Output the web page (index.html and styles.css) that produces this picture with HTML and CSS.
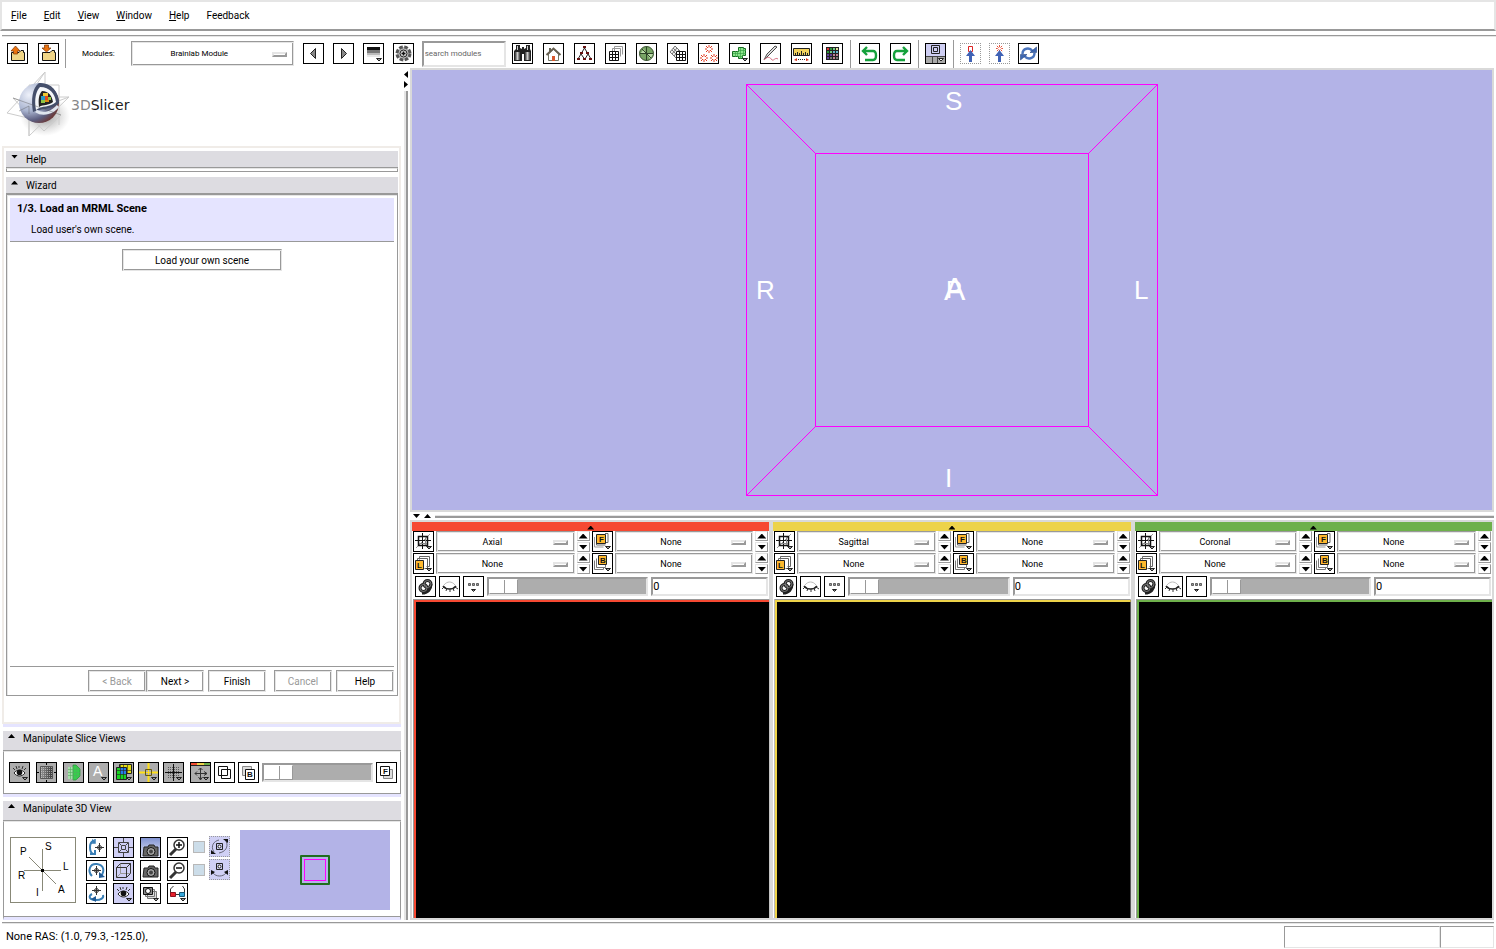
FILE: index.html
```html
<!doctype html>
<html lang="en">
<head>
<meta charset="UTF-8">
<title>3DSlicer</title>
<link rel="stylesheet" href="styles.css">
</head>
<body>

<!-- icon set -->
<svg class="sprite" aria-hidden="true">
<defs>
<radialGradient id="ball" cx="25%" cy="30%" r="80%"><stop offset="0" stop-color="#eef1fa"/><stop offset=".5" stop-color="#a9b4d0"/><stop offset=".8" stop-color="#5c5e80"/><stop offset="1" stop-color="#6b3a3a"/></radialGradient>
<radialGradient id="shade"><stop offset="0" stop-color="#444" stop-opacity=".8"/><stop offset="1" stop-color="#888" stop-opacity="0"/></radialGradient>
<linearGradient id="fade"><stop offset="0" stop-color="#999"/><stop offset="1" stop-color="#333"/></linearGradient>
<linearGradient id="sky" x1="0" y1="0" x2="0" y2="1"><stop offset="0" stop-color="#8294d2"/><stop offset="1" stop-color="#e4e8fa"/></linearGradient>
<linearGradient id="tube"><stop offset="0" stop-color="#333"/><stop offset=".5" stop-color="#ccc"/><stop offset="1" stop-color="#333"/></linearGradient>
<pattern id="dots" width="2" height="2" patternUnits="userSpaceOnUse"><path fill="#222" d="M0 0h1v1H0z"/></pattern>
<pattern id="lights" width="2" height="2" patternUnits="userSpaceOnUse"><path fill="#ddd" d="M0 0h1v1H0z"/></pattern>
</defs>
<symbol id="dd" viewBox="0 0 19 19"><path d="M12.500 14.500h5l-2.500 2.500z" fill="#999" stroke="#222"/></symbol>
<symbol id="i-folder" viewBox="0 0 19 19"><path d="M3.500 8.500H11l2-2h2.500v2h1v8h-13z" fill="#f0d587" stroke="#111"/></symbol>
<symbol id="i-load" viewBox="0 0 19 19"><use href="#i-folder"/><path d="M7.500 2l4.500 5H9.500v3h-4V7H3z" fill="#ea720f" stroke="#7a3505" stroke-width=".7"/></symbol>
<symbol id="i-save" viewBox="0 0 19 19"><use href="#i-folder"/><path d="M7.500 8L12 4H9.500V1h-4v3H3z" fill="#ea720f" stroke="#7a3505" stroke-width=".7"/></symbol>
<symbol id="i-prev" viewBox="0 0 19 19"><path d="M11.500 4.500v10l-5-5z" fill="#888" stroke="#222"/></symbol>
<symbol id="i-next" viewBox="0 0 19 19"><path d="M7.500 4.500v10l5-5z" fill="#888" stroke="#222"/></symbol>
<symbol id="i-history" viewBox="0 0 19 19"><path fill="#111" d="M3 3h13v3H3z"/><path fill="#777" d="M3 6h13v3H3z"/><path fill="#bbb" d="M3 9h13v2H3z"/><path fill="#e8e8e8" d="M3 11h13v2H3z"/><use href="#dd"/></symbol>
<symbol id="i-gear" viewBox="0 0 19 19"><circle cx="9.500" cy="9.500" r="6.500" fill="#bbb" stroke="#555" stroke-width="3" stroke-dasharray="3.600 1.500"/><circle cx="9.500" cy="9.500" r="3.500" fill="#ddd" stroke="#222"/><path d="M9.500 7.500v4m-2-2h4" stroke="#111" stroke-width="1.500"/></symbol>
<symbol id="i-binoculars" viewBox="0 0 19 19"><path d="M3 1h4v3l2 1V3h2v2l2-1V1h4v4l1 2v10h-7v-7H9v7H1V7l2-2z" fill="#222"/><path fill="url(#tube)" d="M2 8h5v8H2z"/><path fill="url(#tube)" d="M12 8h5v8h-5z"/><path d="M4.500 2v4m10-4v4" stroke="#ccc"/></symbol>
<symbol id="i-home" viewBox="0 0 19 19"><path d="M5 4h2v4H5z" fill="#665"/><path d="M4.500 10v6.500h10V10l-5-5z" fill="#fff" stroke="#776"/><path d="M2.500 11l7-6.500 7 6.500" fill="none" stroke="#665f50" stroke-width="2"/><path d="M8 12h3v5H8z" fill="#d8572c"/></symbol>
<symbol id="i-tree" viewBox="0 0 19 19"><path d="M9.500 4L3 15m6.500-11l6.500 11M6 10l3.500 5m3.500-5l-3 5" fill="none" stroke="#222"/><path d="M8 2h3v2H8zM5 8h3v2H5zm6 0h3v2h-3zM2 14h3v2H2zm6 0h3v2H8zm6 0h3v2h-3z" fill="#611"/></symbol>
<symbol id="i-volumes" viewBox="0 0 19 19"><path d="M8.500 12.500v-10h8v8M6.500 12.500v-8h8v8" fill="none" stroke="#999"/><path d="M3 7h10v10H3z" fill="#fff"/><path d="M3.500 7.500h9v9h-9zM6.500 7v10m3-10v10M3 10.500h10m-10 3h10" fill="none" stroke="#111"/></symbol>
<symbol id="i-models" viewBox="0 0 19 19"><circle cx="9.500" cy="9.500" r="7" fill="#78a565" stroke="#354e2a"/><path d="M3 10l4-5 2 5zM10 10h6l-3 5z" fill="#bddcaa"/><path d="M9.500 2.500v14M3 9.500h13M5 5l4 4 5 5" fill="none" stroke="#2d4427"/></symbol>
<symbol id="i-transforms" viewBox="0 0 19 19"><path d="M7 2l7 7-5 6-7-7z" fill="#eee" stroke="#777"/><path d="M5 4l7 7M4 6l7 7M9 4L4 10m7-4l-5 6" fill="none" stroke="#777"/><path fill="#fff" d="M8 7h10v10H8z"/><path d="M8.500 7.500h9v9h-9zM11.500 7v10m3-10v10M8 10.500h10m-10 3h10" fill="none" stroke="#111"/></symbol>
<symbol id="i-spark" viewBox="0 0 8 8"><path d="M4 0v2.500M4 5.500V8M1 1l2 2m2 2l2 2M7 1L5 3M3 5L1 7M0 4h2m4 0h2" stroke="#e23b20" fill="none"/></symbol>
<symbol id="i-fiducials" viewBox="0 0 19 19"><use href="#i-spark" x="6" y="1" width="8" height="8"/><use href="#i-spark" x="1" y="10" width="8" height="8"/><use href="#i-spark" x="11" y="10" width="8" height="8"/></symbol>
<symbol id="i-editor" viewBox="0 0 19 19"><path d="M8.500 3.500h5v1h2v7h-3v3h-4v-2h-6v-5h6z" fill="#8be58b" stroke="#156b20"/><path d="M7.500 7v6m3-9v11m3-10v7M3 9.500h13M8 6.500h8M5.500 7v6M9 12.500h4" stroke="#3aa348" stroke-width=".7"/><use href="#dd"/></symbol>
<symbol id="i-measure" viewBox="0 0 19 19"><path d="M3 16l3-6 8-8 2 1-8 8z" fill="#ddd" stroke="#222" stroke-width=".8"/><path d="M3 16c4-4 6-3 8 0 2 1 3-3 6-1" fill="none" stroke="#d67083"/></symbol>
<symbol id="i-ruler" viewBox="0 0 19 19"><path d="M1.500 4.500h16v7h-16z" fill="#f3d25b" stroke="#222"/><path d="M3.500 12V9m2 3V8m2 4V9m2 3V7m2 5V9m2 3V8m2 4V9" stroke="#222"/><path d="M2 16l3-2v3zm15 0l-3-2v3z" fill="#d8331d"/><path d="M6 15.500h7" stroke="#222" stroke-dasharray="1 1"/></symbol>
<symbol id="i-colors" viewBox="0 0 19 19"><path fill="#222" d="M3 3h13v13H3z"/><path fill="#d33" d="M4 4h2v2H4z"/><path fill="#2a9a3a" d="M7 4h2v2H7zM4 7h2v2H4z"/><path fill="#70cc86" d="M10 4h2v2h-2zM7 7h2v2H7z"/><path fill="#e0dc9a" d="M13 4h2v2h-2z"/><path fill="#61b7cc" d="M10 7h2v2h-2zM13 7h2v2h-2z"/><path fill="#64439c" d="M4 10h2v2H4zM7 10h2v2H7zM4 13h2v2H4z"/><path fill="#be8195" d="M10 10h2v2h-2zM13 10h2v2h-2zM10 13h2v2h-2z"/><path fill="#777" d="M7 13h2v2H7zM13 13h2v2h-2z"/></symbol>
<symbol id="i-undo" viewBox="0 0 19 19"><path d="M7 3L3 7l4 4M4 7h9c4 0 4 9 0 9H5" fill="none" stroke="#15a13c" stroke-width="2.400"/></symbol>
<symbol id="i-redo" viewBox="0 0 19 19"><path d="M12 3l4 4-4 4M15 7H6c-4 0-4 9 0 9h8" fill="none" stroke="#15a13c" stroke-width="2.400"/></symbol>
<symbol id="i-layout" viewBox="0 0 19 19"><path fill="#cfcff3" d="M0 0h19v12H0z"/><path fill="#aaa" d="M0 13h19v6H0z"/><path d="M0 12.500h19M6.500 13v6m5-6v6" stroke="#444"/><path d="M5.500 1.500h8v8h-8zM7.500 3.500h4v4h-4z" fill="none" stroke="#222"/><path d="M12.500 14.500h5l-2.500 2.500z" fill="#fff" stroke="#222"/></symbol>
<symbol id="i-pick" viewBox="0 0 19 19"><path d="M7.500 2.500h4v5h-4z" fill="none" stroke="#d22"/><path d="M9.500 6l4.500 6h-3v6H8v-6H5z" fill="#4062b5"/></symbol>
<symbol id="i-place" viewBox="0 0 19 19"><use href="#i-spark" x="6" y="1" width="7" height="7"/><path d="M9.500 6l4.500 6h-3v6H8v-6H5z" fill="#4062b5"/></symbol>
<symbol id="i-refresh" viewBox="0 0 19 19"><path d="M3.500 10c0-6 7-7 10-3M15.500 9c0 6-7 7-10 3" fill="none" stroke="#4a74bd" stroke-width="2.400"/><path d="M11 8.500h6.500V3zM8 10.500H1.500V16z" fill="#3e67b0" stroke="#264785" stroke-width=".6"/></symbol>
<symbol id="i-eye" viewBox="0 0 19 19"><path d="M4 10c3-4 8-4 11 0-3 4-8 4-11 0z" fill="#fff" stroke="#222"/><circle cx="9.500" cy="9.500" r="2.800" fill="#111"/><path d="M5 7L3 5m4 1L6 3m3 2V3m3 3l1-3m1 4l2-2" stroke="#333"/><use href="#dd"/></symbol>
<symbol id="i-fit" viewBox="0 0 19 19"><path d="M3.500 3.500h12v12h-12z" fill="url(#fade)" stroke="#555"/><path d="M4 4h11v11H4z" fill="url(#lights)" opacity=".6"/><path d="M9.500 0v2m0 15v2M0 9.500h2m15 0h2" stroke="#000"/></symbol>
<symbol id="i-label" viewBox="0 0 19 19"><path d="M4 4h6v12H4z" fill="#a9dfac"/><path d="M9 2h3l4 4v7l-4 4H9z" fill="#36cf4b" stroke="#279037" stroke-width=".7"/><path d="M4 6.500h12M4 9.500h12M4 12.500h12M6.500 4v12m3-13v14m3-14v14" stroke="#4fae5c" stroke-width=".6"/></symbol>
<symbol id="i-blend" viewBox="0 0 19 19"><path fill="#e6df13" stroke="#222" d="M5.500 1.500h12v9h-12z"/><path fill="#18d321" stroke="#222" d="M2.500 4.500h10v12h-10z"/><path fill="#267de8" d="M6 5h6v6H6z"/><path d="M6.500 2v14m3-14v14m4-14v9M3 7.500h14m-14 4h10" stroke="#222" stroke-width=".6"/><use href="#dd"/></symbol>
<symbol id="i-cross" viewBox="0 0 19 19"><path d="M9.500 0v6m0 7v6M0 9.500h6m7 0h6" stroke="#ffdf18" stroke-width="2"/><path d="M6.500 6.500h6v6h-6z" fill="none" stroke="#665a08"/><path d="M9.500 7v5M7 9.500h5" stroke="#ffdf18"/><use href="#dd"/></symbol>
<symbol id="i-grid" viewBox="0 0 19 19"><path d="M3 3h13v13H3z" fill="url(#dots)" opacity=".6"/><path d="M9.500 1v17M1 9.500h17" stroke="#111"/><use href="#dd"/></symbol>
<symbol id="i-move" viewBox="0 0 19 19"><path fill="#f34e33" d="M0 0h6v2H0z"/><path fill="#edd34a" d="M6 0h7v2H6z"/><path fill="#6eb04b" d="M13 0h6v2h-6z"/><path d="M0 2.500h19" stroke="#222"/><path d="M9.500 5v12M4 10.500h12M7.500 7l2-2 2 2m-4 7l2 3 2-3M6 8.500l-2 2 2 2m7-4l3 2-3 2" fill="none" stroke="#333"/><use href="#dd"/></symbol>
<symbol id="i-overlap" viewBox="0 0 19 19"><path d="M3.500 3.500h9v9h-9zM6.500 6.500h9v9h-9z" fill="none" stroke="#111"/></symbol>
<symbol id="i-back" viewBox="0 0 19 19"><path d="M3.500 3.500h9v9h-9z" fill="#ddd" stroke="#888"/><path d="M6.500 6.500h9v10h-9z" fill="#fff" stroke="#111"/></symbol>
<symbol id="i-fore" viewBox="0 0 19 19"><path d="M6.500 6.500h9v9h-9z" fill="#ddd" stroke="#888"/><path d="M3.500 3.500h9v9h-9z" fill="#fff" stroke="#111"/></symbol>
<symbol id="i-target" viewBox="0 0 19 19"><circle cx="9.500" cy="9.500" r="2" fill="none" stroke="#333"/><path d="M9.500 5v9M5 9.500h9" stroke="#333"/></symbol>
<symbol id="i-pitch" viewBox="0 0 19 19"><path d="M6 16C2 14 2 5 6 3M3 16h5v-4" fill="none" stroke="#397eb5" stroke-width="2"/><path d="M4 5h4V1M5 2c2 0 2 3 2 3" fill="none" stroke="#397eb5" stroke-width="1.500"/><use href="#i-target" x="3"/></symbol>
<symbol id="i-roll" viewBox="0 0 19 19"><path d="M5 15C0 10 3 2 10 3s8 7 4 12" fill="none" stroke="#397eb5" stroke-width="2"/><path d="M12 17v-6l6 5z" fill="#205994"/><use href="#i-target"/></symbol>
<symbol id="i-yaw" viewBox="0 0 19 19"><path d="M5 10c-4 2-3 6 4 6 5 0 8-2 7-5" fill="none" stroke="#397eb5" stroke-width="2"/><path d="M9 12v6l-5-3z" fill="#205994"/><use href="#i-target" y="-3"/></symbol>
<symbol id="i-center" viewBox="0 0 19 19"><path d="M4.500 4.500h10v10h-10zM7.500 7.500h4v4h-4zM9.500 0v4m0 11v4M0 9.500h4m11 0h4M5 5l2 2m7-2l-2 2m-7 7l2-2m7 2l-2-2" fill="none" stroke="#444"/></symbol>
<symbol id="i-cube" viewBox="0 0 19 19"><path d="M6.500 3v9.500H16m-13.500 4l4-4" fill="none" stroke="#999"/><path d="M2.500 6.500h10v10h-10zM6.500 2.500h10v10M2.500 6.500l4-4m6 4l4-4m-4 14l4-4" fill="none" stroke="#333"/></symbol>
<symbol id="i-camera" viewBox="0 0 19 19"><path d="M3 7h4l1-2h5l1 2h3v9H2z" fill="#666" stroke="#222"/><circle cx="10" cy="11.500" r="4" fill="#aaa" stroke="#111"/><circle cx="10" cy="11.500" r="2" fill="#444"/></symbol>
<symbol id="i-shot" viewBox="0 0 19 19"><path d="M0 0h19v19H0z" fill="url(#sky)"/><use href="#i-camera" y="2"/></symbol>
<symbol id="i-zoomin" viewBox="0 0 19 19"><path d="M8 11l-6 6" stroke="#333" stroke-width="3"/><circle cx="11" cy="7" r="5" fill="#fff" stroke="#333" stroke-width="1.500"/><path d="M11 4v6M8 7h6" stroke="#111" stroke-width="1.500"/></symbol>
<symbol id="i-zoomout" viewBox="0 0 19 19"><path d="M8 11l-6 6" stroke="#333" stroke-width="3"/><circle cx="11" cy="7" r="5" fill="#fff" stroke="#333" stroke-width="1.500"/><path d="M8 7h6" stroke="#111" stroke-width="1.500"/></symbol>
<symbol id="i-cams" viewBox="0 0 19 19"><path d="M6.500 7.500h9v7h-9zM4.500 5.500h9v7h-9z" fill="#ddd" stroke="#777"/><path d="M2.500 3.500h9v7h-9z" fill="#888" stroke="#111"/><circle cx="7" cy="7" r="2.500" fill="#fff" stroke="#111"/><use href="#dd"/></symbol>
<symbol id="i-stereo" viewBox="0 0 19 19"><path d="M2.500 10V5l3-3M16.500 10V5l-2-3M8 10.500h3" fill="none" stroke="#333"/><path fill="#e7202c" stroke="#8c1320" d="M2.500 8.500h5v4h-5z"/><path fill="#35a8dc" stroke="#155878" d="M11.500 8.500h5v4h-5z"/><use href="#dd"/></symbol>
<symbol id="i-spin" viewBox="0 0 19 19"><path d="M6.500 6.500h6v6h-6z" fill="none" stroke="#222"/><circle cx="9.500" cy="9.500" r="1.500" fill="#fff" stroke="#222"/><path d="M4 15C0 9 4 4 9 3m7 1c3 6-1 11-7 12" fill="none" stroke="#667"/><path d="M1 13v4h5zM13 2h5v4z" fill="#111"/></symbol>
<symbol id="i-rock" viewBox="0 0 19 19"><path d="M6.500 3.500h6v6h-6z" fill="none" stroke="#222"/><circle cx="9.500" cy="6.500" r="1.500" fill="#fff" stroke="#222"/><path d="M3 13c3 4 10 4 13 0" fill="none" stroke="#667"/><path d="M1 15v-5l4 2zM18 15v-5l-4 2z" fill="#111"/></symbol>
<symbol id="i-slice" viewBox="0 0 19 19"><path d="M2 16L16 2" stroke="#999"/><path d="M4.500 4.500h9v9h-9z" fill="none" stroke="#111" stroke-width="1.500"/><path d="M8.500 1v16M1 8.500h16" stroke="#111"/><path d="M5 11.500h8M11.500 5v8" stroke="#888"/><use href="#dd"/></symbol>
<symbol id="i-lab" viewBox="0 0 19 19"><path d="M5.500 5.500v-3h10v10h-3M3.500 7.500v-3h10v10h-3" fill="none" stroke="#666"/><path fill="#ffb92e" stroke="#222" d="M1.500 6.500h8v9h-8z"/><use href="#dd"/></symbol>
<symbol id="i-fg" viewBox="0 0 19 19"><path d="M3.500 5v8h9M12 1.500h3v9h-3" fill="none" stroke="#666"/><path d="M1.500 5v10h9" fill="none" stroke="#999"/><path fill="#ffb92e" stroke="#222" d="M3.500 2.500h9v9h-9z"/><use href="#dd"/></symbol>
<symbol id="i-bg" viewBox="0 0 19 19"><path d="M3.500 4.500v9h9v-3M1.500 6.500v9h9v-2" fill="none" stroke="#777"/><path fill="#ffb92e" stroke="#222" d="M5.500 1.500h8v9h-8z"/><use href="#dd"/></symbol>
<symbol id="i-link" viewBox="0 0 19 19"><g fill="none" stroke="#222" stroke-width="3"><circle cx="11.500" cy="7" r="3.500"/><circle cx="7.500" cy="11" r="3.500"/><path d="M15 7c0 5-3 9-9 9"/></g><g fill="none" stroke="#999" stroke-width=".7"><circle cx="11.500" cy="7" r="3.500"/><circle cx="7.500" cy="11" r="3.500"/></g></symbol>
<symbol id="i-hide" viewBox="0 0 19 19"><path d="M3 9c3 4 10 4 13 0" fill="none" stroke="#222" stroke-width="1.500"/><path d="M4 8c3-4 8-4 11 0" fill="none" stroke="#bbb"/><path d="M4 10l-2 2m5-1l-1 3m4-2v3m3-4l1 3m1-4l3 2" stroke="#333"/></symbol>
<symbol id="i-more" viewBox="0 0 19 19"><path d="M4.500 6.500h2v2h-2zm4 0h2v2h-2zm4 0h2v2h-2z" fill="#999" stroke="#444" stroke-width=".8"/><path d="M7.500 12.500h4l-2 2z" fill="#777" stroke="#222"/></symbol>
</svg>

<nav class="menubar">
<a href="#"><u>F</u>ile</a>
<a href="#"><u>E</u>dit</a>
<a href="#"><u>V</u>iew</a>
<a href="#"><u>W</u>indow</a>
<a href="#"><u>H</u>elp</a>
<a href="#">Feedback</a>
</nav>

<header class="toolbar">
<div class="tools">
<button class="icon" aria-label="Load"><svg><use href="#i-load"/></svg></button>
<button class="icon" aria-label="Save"><svg><use href="#i-save"/></svg></button>
</div>
<label class="modules-label" for="modules">Modules:</label>
<span class="pick modules"><select id="modules"><option>Brainlab Module</option></select></span>
<div class="tools nav">
<button class="icon" aria-label="Previous module"><svg><use href="#i-prev"/></svg></button>
<button class="icon" aria-label="Next module"><svg><use href="#i-next"/></svg></button>
<button class="icon" aria-label="History"><svg><use href="#i-history"/></svg></button>
<button class="icon" aria-label="Refresh"><svg><use href="#i-gear"/></svg></button>
</div>
<input class="search" type="text" placeholder="search modules" aria-label="search modules">
<div class="tools">
<button class="icon" aria-label="Search"><svg><use href="#i-binoculars"/></svg></button>
<button class="icon" aria-label="Home"><svg><use href="#i-home"/></svg></button>
<button class="icon" aria-label="Data"><svg><use href="#i-tree"/></svg></button>
<button class="icon" aria-label="Volumes"><svg><use href="#i-volumes"/></svg></button>
<button class="icon" aria-label="Models"><svg><use href="#i-models"/></svg></button>
<button class="icon" aria-label="Transforms"><svg><use href="#i-transforms"/></svg></button>
<button class="icon" aria-label="Fiducials"><svg><use href="#i-fiducials"/></svg></button>
<button class="icon" aria-label="Editor"><svg><use href="#i-editor"/></svg></button>
<button class="icon" aria-label="Measurements"><svg><use href="#i-measure"/></svg></button>
<button class="icon" aria-label="Ruler"><svg><use href="#i-ruler"/></svg></button>
<button class="icon" aria-label="Colors"><svg><use href="#i-colors"/></svg></button>
</div>
<div class="tools group">
<button class="icon" aria-label="Undo"><svg><use href="#i-undo"/></svg></button>
<button class="icon" aria-label="Redo"><svg><use href="#i-redo"/></svg></button>
</div>
<div class="tools group tight">
<button class="icon" aria-label="Layout"><svg><use href="#i-layout"/></svg></button>
</div>
<div class="tools group tight">
<button class="icon dotted" aria-label="Pick"><svg><use href="#i-pick"/></svg></button>
<button class="icon dotted" aria-label="Place"><svg><use href="#i-place"/></svg></button>
<button class="icon" aria-label="Transform view"><svg><use href="#i-refresh"/></svg></button>
</div>
</header>

<main class="main">
<aside class="side">
<div class="logo">
<svg width="70" height="70" viewBox="0 0 70 70" aria-hidden="true">
<ellipse cx="45" cy="46" rx="25" ry="20" fill="url(#shade)" opacity=".7"/>
<path d="M45 2v50L7 43 45 2zM69 27L29 66V42zM13 28l48 17-17 16zM69 27H28l17-25M29 66V15h30v40" fill="none" stroke="#ccc"/>
<circle cx="39" cy="33" r="20" fill="url(#ball)"/>
<path d="M33 42C31 30 32 18 39 13c11-1 20 8 20 20-6 7-18 5-26 9z" fill="#454f6b"/>
<path d="M36 40c-2-11 0-19 4-23 10 0 15 7 16 15-6 6-14 3-20 8z" fill="#f5f7fa"/>
<path d="M39 37c-1-8 0-13 3-16 7 0 10 5 11 11-5 4-9 2-14 5z" fill="#222"/>
<path fill="#2999c5" d="M41 26h4v4h-4z"/><path fill="#e5471c" d="M45 26h3v4h-3z"/><path fill="#efc732" d="M43 23h5v3h-5z"/><path fill="#8fc545" d="M41 30h4v3h-4zM48 27h3v3h-3z"/><path fill="#dc8a16" d="M45 30h4v2h-4z"/>
<path d="M36 41c8 5 17 1 22-5" fill="none" stroke="#dfe5ef" stroke-width="3"/>
<path d="M13 28l48 17M29 44v-8l-10 5" fill="none" stroke="#555" stroke-opacity=".4"/>
</svg>
<span class="brand"><span>3D</span>Slicer</span>
</div>

<section class="module">
<button class="fold"><i class="tri down"></i>Help</button>
<div class="closed"></div>
<button class="fold"><i class="tri up"></i>Wizard</button>
<div class="wizard">
<div class="step">
<h1>1/3. Load an MRML Scene</h1>
<p>Load user's own scene.</p>
</div>
<button class="btn load">Load your own scene</button>
<div class="wizard-buttons">
<button class="btn" disabled>&lt; Back</button>
<button class="btn">Next &gt;</button>
<button class="btn finish">Finish</button>
<button class="btn cancel" disabled>Cancel</button>
<button class="btn help">Help</button>
</div>
</div>
</section>

<section class="dock">
<button class="fold"><i class="tri up"></i>Manipulate Slice Views</button>
<div class="dock-body slice-tools">
<button class="icon grey" aria-label="Visibility"><svg><use href="#i-eye"/></svg></button>
<button class="icon grey" aria-label="Fit"><svg><use href="#i-fit"/></svg></button>
<div class="cluster">
<button class="icon grey" aria-label="Label"><svg><use href="#i-label"/></svg></button>
<button class="icon grey" aria-label="Annotation"><svg><text x="4" y="13" class="icon-a">A</text><use href="#dd"/></svg></button>
<button class="icon grey" aria-label="Composite"><svg><use href="#i-blend"/></svg></button>
<button class="icon grey" aria-label="Crosshair"><svg><use href="#i-cross"/></svg></button>
<button class="icon grey" aria-label="Grid"><svg><use href="#i-grid"/></svg></button>
</div>
<div class="cluster wide">
<button class="icon grey" aria-label="Spatial units"><svg><use href="#i-move"/></svg></button>
<button class="icon" aria-label="Toggle"><svg><use href="#i-overlap"/></svg></button>
<button class="icon" aria-label="Background"><svg><use href="#i-back"/><text x="8" y="14" class="icon-s">B</text></svg></button>
<input class="slider" type="range" value="0" aria-label="Fade">
<button class="icon" aria-label="Foreground"><svg><use href="#i-fore"/><text x="6" y="11" class="icon-s">F</text></svg></button>
</div>
</div>
</section>

<section class="dock">
<button class="fold"><i class="tri up"></i>Manipulate 3D View</button>
<div class="dock-body view-tools">
<svg class="axes" viewBox="0 0 64 64">
<path d="M31.500 11v42M13 32.500h37M18 19l27 27" fill="none" stroke="#888877"/>
<path d="M30 31h3v3h-3z"/>
<text x="9" y="17">P</text><text x="34" y="12">S</text><text x="52" y="32">L</text><text x="7" y="41">R</text><text x="25" y="58">I</text><text x="47" y="55">A</text>
</svg>
<div class="view-grid">
<button class="icon" aria-label="Pitch"><svg><use href="#i-pitch"/></svg></button>
<button class="icon on" aria-label="Center"><svg><use href="#i-center"/></svg></button>
<button class="icon" aria-label="Screenshot"><svg><use href="#i-shot"/></svg></button>
<button class="icon" aria-label="Zoom in"><svg><use href="#i-zoomin"/></svg></button>
<button class="icon" aria-label="Roll"><svg><use href="#i-roll"/></svg></button>
<button class="icon on" aria-label="Orthographic"><svg><use href="#i-cube"/></svg></button>
<button class="icon" aria-label="Camera"><svg><use href="#i-camera"/></svg></button>
<button class="icon" aria-label="Zoom out"><svg><use href="#i-zoomout"/></svg></button>
<button class="icon" aria-label="Yaw"><svg><use href="#i-yaw"/></svg></button>
<button class="icon on" aria-label="View visibility"><svg><use href="#i-eye"/></svg></button>
<button class="icon" aria-label="Cameras"><svg><use href="#i-cams"/></svg></button>
<button class="icon" aria-label="Stereo"><svg><use href="#i-stereo"/></svg></button>
</div>
<div class="motion">
<label><input type="checkbox" aria-label="Spin"><span class="icon dotted on"><svg><use href="#i-spin"/></svg></span></label>
<label><input type="checkbox" aria-label="Rock"><span class="icon dotted on"><svg><use href="#i-rock"/></svg></span></label>
</div>
<div class="navigator"><div class="nav-frame"><div class="nav-box"></div></div></div>
</div>
</section>
</aside>

<div class="split-v"><i class="tri left"></i><i class="tri right"></i></div>

<div class="work">
<div class="view3d">
<svg width="412" height="412" viewBox="0 0 412 412">
<g fill="none" stroke="#ff00ff" shape-rendering="crispEdges">
<path d="M.5.500h411v411H.5zM69.500 69.500h273v273h-273z"/>
<path d="M.5.500l69 69M411.500.500l-69 69M.5 411.500l69-69M411.500 411.500l-69-69"/>
</g>
<text x="199" y="26">S</text>
<text x="10" y="215">R</text>
<text x="388" y="215">L</text>
<text x="199" y="403">I</text>
<text x="200" y="214" class="back">P</text>
<text x="198" y="216" class="front">A</text>
</svg>
</div>
<div class="split-h"><i class="tri down"></i><i class="tri up"></i></div>

<div class="slices">
<section class="slice red">
<button class="bar" aria-label="Collapse Axial"><i class="tri up"></i></button>
<div class="controls">
<button class="icon" aria-label="Orientation menu"><svg><use href="#i-slice"/></svg></button>
<span class="pick"><select aria-label="Orientation"><option>Axial</option></select></span>
<span class="spin"><button aria-label="Up"><i class="tri up"></i></button><button aria-label="Down"><i class="tri down"></i></button></span>
<button class="icon" aria-label="Foreground menu"><svg><use href="#i-fg"/><text x="6" y="10" class="icon-s">F</text></svg></button>
<span class="pick"><select aria-label="Foreground"><option>None</option></select></span>
<span class="spin"><button aria-label="Up"><i class="tri up"></i></button><button aria-label="Down"><i class="tri down"></i></button></span>
<button class="icon" aria-label="Label menu"><svg><use href="#i-lab"/><text x="3" y="14" class="icon-s">L</text></svg></button>
<span class="pick"><select aria-label="Label"><option>None</option></select></span>
<span class="spin"><button aria-label="Up"><i class="tri up"></i></button><button aria-label="Down"><i class="tri down"></i></button></span>
<button class="icon" aria-label="Background menu"><svg><use href="#i-bg"/><text x="7" y="9" class="icon-s">B</text></svg></button>
<span class="pick"><select aria-label="Background"><option>None</option></select></span>
<span class="spin"><button aria-label="Up"><i class="tri up"></i></button><button aria-label="Down"><i class="tri down"></i></button></span>
</div>
<div class="offset">
<button class="icon" aria-label="Link"><svg><use href="#i-link"/></svg></button>
<button class="icon" aria-label="Hide"><svg><use href="#i-hide"/></svg></button>
<button class="icon" aria-label="More"><svg><use href="#i-more"/></svg></button>
<input class="slider" type="range" value="0" aria-label="Offset">
<input class="number" type="text" value="0" aria-label="Offset value">
</div>
<div class="canvas"></div>
</section>

<section class="slice yellow">
<button class="bar" aria-label="Collapse Sagittal"><i class="tri up"></i></button>
<div class="controls">
<button class="icon" aria-label="Orientation menu"><svg><use href="#i-slice"/></svg></button>
<span class="pick"><select aria-label="Orientation"><option>Sagittal</option></select></span>
<span class="spin"><button aria-label="Up"><i class="tri up"></i></button><button aria-label="Down"><i class="tri down"></i></button></span>
<button class="icon" aria-label="Foreground menu"><svg><use href="#i-fg"/><text x="6" y="10" class="icon-s">F</text></svg></button>
<span class="pick"><select aria-label="Foreground"><option>None</option></select></span>
<span class="spin"><button aria-label="Up"><i class="tri up"></i></button><button aria-label="Down"><i class="tri down"></i></button></span>
<button class="icon" aria-label="Label menu"><svg><use href="#i-lab"/><text x="3" y="14" class="icon-s">L</text></svg></button>
<span class="pick"><select aria-label="Label"><option>None</option></select></span>
<span class="spin"><button aria-label="Up"><i class="tri up"></i></button><button aria-label="Down"><i class="tri down"></i></button></span>
<button class="icon" aria-label="Background menu"><svg><use href="#i-bg"/><text x="7" y="9" class="icon-s">B</text></svg></button>
<span class="pick"><select aria-label="Background"><option>None</option></select></span>
<span class="spin"><button aria-label="Up"><i class="tri up"></i></button><button aria-label="Down"><i class="tri down"></i></button></span>
</div>
<div class="offset">
<button class="icon" aria-label="Link"><svg><use href="#i-link"/></svg></button>
<button class="icon" aria-label="Hide"><svg><use href="#i-hide"/></svg></button>
<button class="icon" aria-label="More"><svg><use href="#i-more"/></svg></button>
<input class="slider" type="range" value="0" aria-label="Offset">
<input class="number" type="text" value="0" aria-label="Offset value">
</div>
<div class="canvas"></div>
</section>

<section class="slice green">
<button class="bar" aria-label="Collapse Coronal"><i class="tri up"></i></button>
<div class="controls">
<button class="icon" aria-label="Orientation menu"><svg><use href="#i-slice"/></svg></button>
<span class="pick"><select aria-label="Orientation"><option>Coronal</option></select></span>
<span class="spin"><button aria-label="Up"><i class="tri up"></i></button><button aria-label="Down"><i class="tri down"></i></button></span>
<button class="icon" aria-label="Foreground menu"><svg><use href="#i-fg"/><text x="6" y="10" class="icon-s">F</text></svg></button>
<span class="pick"><select aria-label="Foreground"><option>None</option></select></span>
<span class="spin"><button aria-label="Up"><i class="tri up"></i></button><button aria-label="Down"><i class="tri down"></i></button></span>
<button class="icon" aria-label="Label menu"><svg><use href="#i-lab"/><text x="3" y="14" class="icon-s">L</text></svg></button>
<span class="pick"><select aria-label="Label"><option>None</option></select></span>
<span class="spin"><button aria-label="Up"><i class="tri up"></i></button><button aria-label="Down"><i class="tri down"></i></button></span>
<button class="icon" aria-label="Background menu"><svg><use href="#i-bg"/><text x="7" y="9" class="icon-s">B</text></svg></button>
<span class="pick"><select aria-label="Background"><option>None</option></select></span>
<span class="spin"><button aria-label="Up"><i class="tri up"></i></button><button aria-label="Down"><i class="tri down"></i></button></span>
</div>
<div class="offset">
<button class="icon" aria-label="Link"><svg><use href="#i-link"/></svg></button>
<button class="icon" aria-label="Hide"><svg><use href="#i-hide"/></svg></button>
<button class="icon" aria-label="More"><svg><use href="#i-more"/></svg></button>
<input class="slider" type="range" value="0" aria-label="Offset">
<input class="number" type="text" value="0" aria-label="Offset value">
</div>
<div class="canvas"></div>
</section>
</div>
</div>
</main>

<footer class="status">
<span>None RAS: (1.0, 79.3, -125.0),</span>
<div class="progress"></div>
<div class="progress small"></div>
</footer>
</body>
</html>
```

FILE: styles.css
```css
*,
*::after {
box-sizing: border-box;
}

body {
margin: 0;
height: 100vh;
display: flex;
flex-direction: column;
background: #fff;
color: #000;
font: 10px/14px Roboto, "Liberation Sans", sans-serif;
}

button,
input,
select {
font: inherit;
color: inherit;
margin: 0;
padding: 0;
border-radius: 0;
outline: none;
}

button {
background: #fff;
border: 0;
}

.sprite {
position: absolute;
width: 0;
height: 0;
}

/* small arrows */
.tri {
display: block;
flex: none;
width: 7px;
height: 4px;
background: #000;
}
.up { clip-path: polygon(50% 0, 100% 100%, 0 100%); }
.down { clip-path: polygon(0 0, 100% 0, 50% 100%); }
.left,
.right {
width: 4px;
height: 7px;
}
.left { clip-path: polygon(0 50%, 100% 0, 100% 100%); }
.right { clip-path: polygon(0 0, 100% 50%, 0 100%); }

/* menu */
.menubar {
flex: none;
display: flex;
gap: 17px;
height: 31px;
margin-bottom: 4px;
padding: 7px 9px;
border: 2px solid #e5e5e5;
border-bottom-color: #999;
}
.menubar a {
color: #000;
text-decoration: none;
}

/* toolbar */
.toolbar {
flex: none;
display: flex;
align-items: center;
height: 33px;
margin-left: 2px;
padding: 3px 0 0 5px;
border-top: 1px solid #999;
box-shadow: inset 0 1px #e5e5e5;
}
.tools {
display: flex;
align-items: center;
gap: 10px;
}
.nav { gap: 9px; }
.group {
height: 28px;
margin-left: 7px;
padding-left: 8px;
border-left: 1px solid #999;
}
.tight {
gap: 8px;
padding-left: 6px;
}
.icon {
flex: none;
display: block;
width: 21px;
height: 21px;
border: 1px solid #000;
background: #fff;
}
.icon svg {
display: block;
width: 19px;
height: 19px;
}
.dotted { border: 1px dotted #999; }
.grey { background: #adadad; }
.on { background: #d0d0f5; }
.icon-a {
font: 14px "Liberation Sans", sans-serif;
fill: #fff;
}
.icon-s {
font: bold 8px "Liberation Sans", sans-serif;
fill: #111;
}
.modules-label {
align-self: stretch;
display: flex;
align-items: center;
margin-left: 6px;
padding: 0 16px;
border-left: 1px solid #999;
font-size: 8px;
}

.pick {
position: relative;
display: block;
min-width: 0;
}
.pick select {
display: block;
appearance: none;
width: 100%;
height: 21px;
padding-right: 26px;
text-align: center;
text-align-last: center;
font-size: 8px;
background: #fff;
border: 1px solid;
border-color: #999 #e5e5e5 #e5e5e5 #999;
box-shadow: inset 1px 1px #e5e5e5, inset -1px -1px #999;
}
.pick::after {
content: "";
position: absolute;
right: 7px;
top: 50%;
margin-top: -2px;
width: 15px;
height: 5px;
border: 2px solid;
border-color: #e5e5e5 #999 #999 #e5e5e5;
pointer-events: none;
}
.modules {
width: 163px;
margin-right: 9px;
}
.modules select { height: 25px; }

.search {
width: 84px;
height: 26px;
margin: 0 6px 0 8px;
padding: 0 1px;
border: 2px solid;
border-color: #999 #e5e5e5 #e5e5e5 #999;
font-size: 8px;
}
.search::placeholder { color: #666; }

/* page body */
.main {
flex: 1;
min-height: 0;
display: grid;
grid-template-columns: minmax(404px, 27%) 6px 1fr;
}
.side {
display: flex;
flex-direction: column;
min-height: 0;
padding-right: 3px;
}
.logo {
flex: none;
display: flex;
align-items: center;
height: 78px;
padding-bottom: 4px;
}
.brand {
margin-left: 1px;
font: 14px "DejaVu Sans", sans-serif;
color: #222;
}
.brand span { color: #888; }

.fold {
flex: none;
display: flex;
align-items: center;
gap: 8px;
width: 100%;
height: 17px;
padding: 1px 0 0 5px;
background: #dddce1;
border-bottom: 1px solid #999;
}
.fold .tri { margin-bottom: 6px; }
.module {
flex: 1;
min-height: 0;
display: flex;
flex-direction: column;
margin-left: 2px;
padding: 3px 1px 26px 2px;
border: 2px solid #f0ece8;
}
.closed {
flex: none;
height: 4px;
margin-bottom: 5px;
border: 1px solid;
border-color: #e5e5e5 #999 #999 #999;
}
.wizard {
flex: 1;
min-height: 0;
display: flex;
flex-direction: column;
align-items: center;
padding: 3px;
border: 1px solid #999;
box-shadow: inset 1px 1px #e5e5e5;
}
.step {
align-self: stretch;
height: 44px;
padding: 4px 7px;
background: #e5e4ff;
border-bottom: 1px solid #999;
}
.step h1 {
margin: 0;
font-size: 11px;
}
.step p { margin: 7px 14px; }
.btn {
width: 58px;
height: 22px;
padding-top: 2px;
border: 1px solid;
border-color: #999 #e5e5e5 #e5e5e5 #999;
box-shadow: inset 1px 1px #e5e5e5, inset -1px -1px #999;
}
.btn:disabled { color: #999; }
.load {
width: 160px;
margin-top: 7px;
}
.wizard-buttons {
align-self: stretch;
display: flex;
justify-content: flex-end;
margin-top: auto;
padding-top: 3px;
border-top: 1px solid #999;
}
.finish,
.help { margin-left: 4px; }
.cancel { margin-left: 8px; }

.dock {
flex: none;
margin-left: 3px;
padding-top: 4px;
border-top: 3px solid #e5e4ff;
}
.dock .fold {
height: 20px;
padding-top: 0;
padding-bottom: 3px;
}
.dock-body {
display: flex;
border: 1px solid #999;
border-top-color: #e5e5e5;
}
.slice-tools {
align-items: center;
gap: 6px;
height: 43px;
padding: 0 3px 0 5px;
}
.cluster {
display: flex;
align-items: center;
gap: 4px;
}
.wide {
flex: 1;
min-width: 0;
gap: 3px;
}

.slider {
appearance: none;
flex: 1;
width: 0;
min-width: 0;
height: 19px;
background: #adadad;
border: 2px solid;
border-color: #999 #e5e5e5 #e5e5e5 #999;
}
.slider::-webkit-slider-thumb {
appearance: none;
width: 29px;
height: 15px;
background: linear-gradient(#999, #999) 14px 0 / 1px 100% no-repeat #fff;
border: 1px solid;
border-color: #fff #999 #999 #fff;
}

.view-tools {
height: 99px;
padding: 8px 10px 0 6px;
border-bottom: 3px solid #e5e4ff;
box-shadow: inset 0 -1px #999;
}
.axes {
flex: none;
width: 66px;
height: 66px;
margin-top: 7px;
border: 1px solid #888877;
font: 10px "Liberation Sans", sans-serif;
}
.view-grid {
display: grid;
grid-template-columns: repeat(4, 21px);
grid-auto-rows: 21px;
gap: 2px 6px;
margin: 7px 5px 0 10px;
}
.motion {
display: grid;
grid-auto-rows: 21px;
gap: 2px;
align-content: start;
margin-top: 6px;
}
.motion label {
display: flex;
align-items: center;
gap: 4px;
}
.motion input {
appearance: none;
width: 12px;
height: 12px;
background: #ccdde9;
border: 1px solid #b8b8b8;
}
.navigator {
flex: 1;
display: flex;
align-items: center;
justify-content: center;
height: 80px;
margin-left: 10px;
background: #b3b3e7;
}
.nav-frame {
width: 30px;
height: 30px;
padding: 2px;
border: 2px solid #1f6e1f;
border-radius: 1px;
}
.nav-box {
width: 22px;
height: 22px;
border: 1px solid #ff00ff;
}

.split-v {
display: flex;
flex-direction: column;
gap: 3px;
padding-top: 3px;
}
.split-v::after {
content: "";
flex: 1;
width: 4px;
background: #999;
border-left: 2px solid #e5e5e5;
}

/* 3D view and slices */
.work {
display: grid;
grid-template-rows: minmax(0, 444fr) 8px minmax(0, 400fr);
min-width: 0;
margin-right: 2px;
}
.view3d {
display: flex;
align-items: center;
justify-content: center;
background: #b3b3e7;
border: 2px solid #d9d9d9;
overflow: hidden;
}
.view3d text {
font: 26px "Liberation Sans", sans-serif;
fill: #fff;
}
.view3d .front { font-size: 32px; }
.view3d .back { font-size: 24px; }
.split-h {
display: flex;
align-items: center;
gap: 4px;
padding-left: 3px;
}
.split-h::after {
content: "";
flex: 1;
height: 3px;
background: #999;
border-top: 1px solid #e5e5e5;
}
.slices {
display: grid;
grid-template-columns: repeat(3, minmax(0, 1fr));
gap: 4px;
padding: 2px;
background: #d9d9d9;
}
.slice {
display: flex;
flex-direction: column;
min-height: 0;
background: #fff;
}
.bar {
flex: none;
height: 9px;
padding-top: 2px;
background: var(--tone);
}
.bar .tri { margin: 0 auto; }
.red { --tone: #f64932; }
.yellow { --tone: #edd34a; }
.green { --tone: #6eb04b; }
.controls {
display: grid;
grid-template-columns: 21px 1fr 13px 21px 1fr 13px;
gap: 1px 2px;
padding: 0 1px;
}
.controls select { font-size: 9px; }
.spin {
display: grid;
grid-template-rows: 10px 10px;
gap: 1px;
}
.spin button {
display: flex;
align-items: center;
justify-content: center;
border: 1px solid;
border-color: #e5e5e5 #999 #999 #e5e5e5;
}
.spin .tri {
width: 9px;
height: 5px;
}
.offset {
display: flex;
align-items: center;
gap: 3px;
padding: 2px 1px 2px 3px;
}
.number {
width: 117px;
height: 19px;
border: 2px solid;
border-color: #999 #e5e5e5 #e5e5e5 #999;
font-size: 11px;
}
.canvas {
flex: 1;
background: #000;
border: 2px solid var(--tone);
border-width: 2px 0 0 2px;
margin: 1px 0 0 2px;
outline: 1px solid #999;
clip-path: inset(-1px 0 0 -1px);
}

/* status line */
.status {
flex: none;
display: flex;
height: 27px;
margin: 2px 2px 0;
padding: 3px 0 0 4px;
border-top: 1px solid #999;
box-shadow: inset 0 1px #e5e5e5;
font-size: 11px;
}
.status span {
flex: 1;
padding-top: 4px;
}
.progress {
width: 156px;
height: 22px;
border: 1px solid;
border-color: #999 #e5e5e5 #e5e5e5 #999;
}
.small { width: 54px; }
```
